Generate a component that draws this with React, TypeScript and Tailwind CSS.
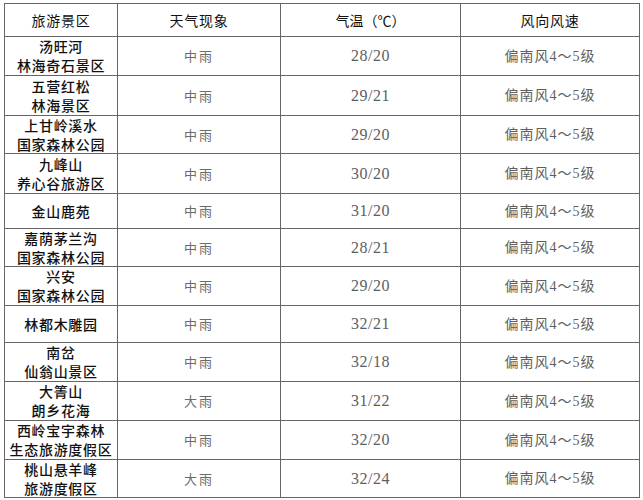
const rows = [
  { h: 'h-[39px]', name: ['汤旺河', '林海奇石景区'], weather: '中雨', temp: '28/20' },
  { h: 'h-[40px]', name: ['五营红松', '林海景区'], weather: '中雨', temp: '29/21' },
  { h: 'h-[38px]', name: ['上甘岭溪水', '国家森林公园'], weather: '中雨', temp: '29/20' },
  { h: 'h-[40px]', name: ['九峰山', '养心谷旅游区'], weather: '中雨', temp: '30/20' },
  { h: 'h-[35px]', name: ['金山鹿苑'], weather: '中雨', temp: '31/20' },
  { h: 'h-[38px]', name: ['嘉荫茅兰沟', '国家森林公园'], weather: '中雨', temp: '28/21' },
  { h: 'h-[39px]', name: ['兴安', '国家森林公园'], weather: '中雨', temp: '29/20' },
  { h: 'h-[37px]', name: ['林都木雕园'], weather: '中雨', temp: '32/21' },
  { h: 'h-[39px]', name: ['南岔', '仙翁山景区'], weather: '中雨', temp: '32/18' },
  { h: 'h-[39px]', name: ['大箐山', '朗乡花海'], weather: '大雨', temp: '31/22' },
  { h: 'h-[39px]', name: ['西岭宝宇森林', '生态旅游度假区'], weather: '中雨', temp: '32/20' },
  { h: 'h-[38px]', name: ['桃山悬羊峰', '旅游度假区'], weather: '大雨', temp: '32/24' },
]

const cell = 'flex items-center justify-center border-r border-b border-[#666] text-center'

export default function App() {
  return (
    <div className="min-h-[500px] bg-white pl-[4px] pt-[3px] font-['Noto_Sans_CJK_SC',sans-serif]">
      <div className="grid w-[636px] grid-cols-[113px_163px_180px_179px] border-l border-t border-[#666]">
        <div className={`${cell} h-[33px] text-[14px] tracking-[0.7px] text-[#111]`}>旅游景区</div>
        <div className={`${cell} h-[33px] text-[14px] tracking-[0.7px] text-[#111]`}>天气现象</div>
        <div className={`${cell} h-[33px] text-[14px] text-[#111]`}>气温（℃）</div>
        <div className={`${cell} h-[33px] text-[14px] tracking-[0.7px] text-[#111]`}>风向风速</div>

        {rows.map((r) => (
          <div key={r.temp + r.name[0]} className="contents">
            <div className={`${cell} ${r.h} flex-col text-[14px] font-medium leading-[19px] tracking-[0.7px] text-[#111]`}>
              {r.name.map((line) => (
                <span key={line}>{line}</span>
              ))}
            </div>
            <div className={`${cell} ${r.h} text-[13px] tracking-[2px] text-[#6b6b6b]`}>{r.weather}</div>
            <div className={`${cell} ${r.h} font-['Liberation_Serif','Noto_Sans_CJK_SC',serif] text-[16px] tracking-[0.5px] text-[#5e5e5e]`}>
              {r.temp}
            </div>
            <div className={`${cell} ${r.h} font-['Liberation_Serif','Noto_Sans_CJK_SC',serif] text-[14px] tracking-[1px] text-[#5e5e5e]`}>
              偏南风4～5级
            </div>
          </div>
        ))}
      </div>
    </div>
  )
}
